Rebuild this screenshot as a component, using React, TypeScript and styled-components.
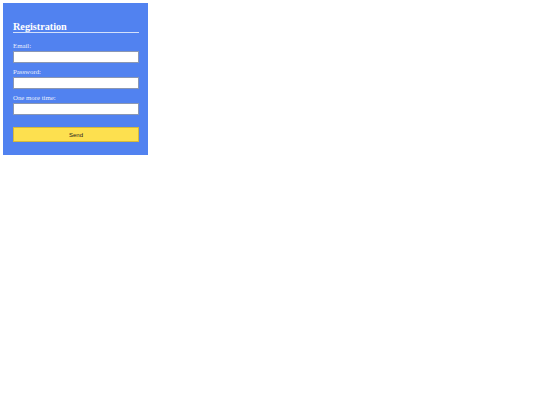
import React from 'react';
import styled, { createGlobalStyle } from 'styled-components';

const GlobalStyle = createGlobalStyle`
  html, body { margin: 0; padding: 0; background: #ffffff; }
  body { font-family: "Liberation Serif", "Times New Roman", serif; }
`;

// --- Styled Components ---
const Page = styled.div` padding: 3px; `;
const Card = styled.form` width: 145px; box-sizing: border-box; background-color: #5182f0; padding: 18px 9px 13px 10px; display: flex; flex-direction: column; `;
const Title = styled.h2` margin: 0 0 9px; font-size: 10.2px; line-height: 11px; font-weight: 700; color: #ffffff; border-bottom: 1px solid rgba(255,255,255,0.75); `;
const Field = styled.div` display: flex; flex-direction: column; gap: 1px; margin-bottom: 5px; `;
const Label = styled.label` font-size: 6.8px; line-height: 8px; color: #e8eefc; `;
const Input = styled.input` box-sizing: border-box; width: 100%; height: 12px; margin: 0; padding: 0 2px; border: 1px solid #8a97b3; background: #ffffff; font-size: 7px; `;
const SendButton = styled.button` margin-top: 7px; height: 15px; width: 100%; box-sizing: border-box; background-color: #fde04f; border: 1px solid #d6b93a; font-family: "Liberation Sans", Arial, sans-serif; font-size: 6px; color: #222; padding: 0; cursor: pointer; `;

const fields = [
  { id: 'email', label: 'Email:', type: 'email' },
  { id: 'password', label: 'Password:', type: 'password' },
  { id: 'repeat', label: 'One more time:', type: 'password' },
];

const App = () => (
  <Page>
    <GlobalStyle />
    <Card onSubmit={(e) => e.preventDefault()}>
      <Title>Registration</Title>
      {fields.map((f) => (
        <Field key={f.id}>
          <Label htmlFor={f.id}>{f.label}</Label>
          <Input id={f.id} type={f.type} />
        </Field>
      ))}
      <SendButton type="submit">Send</SendButton>
    </Card>
  </Page>
);

export default App;
